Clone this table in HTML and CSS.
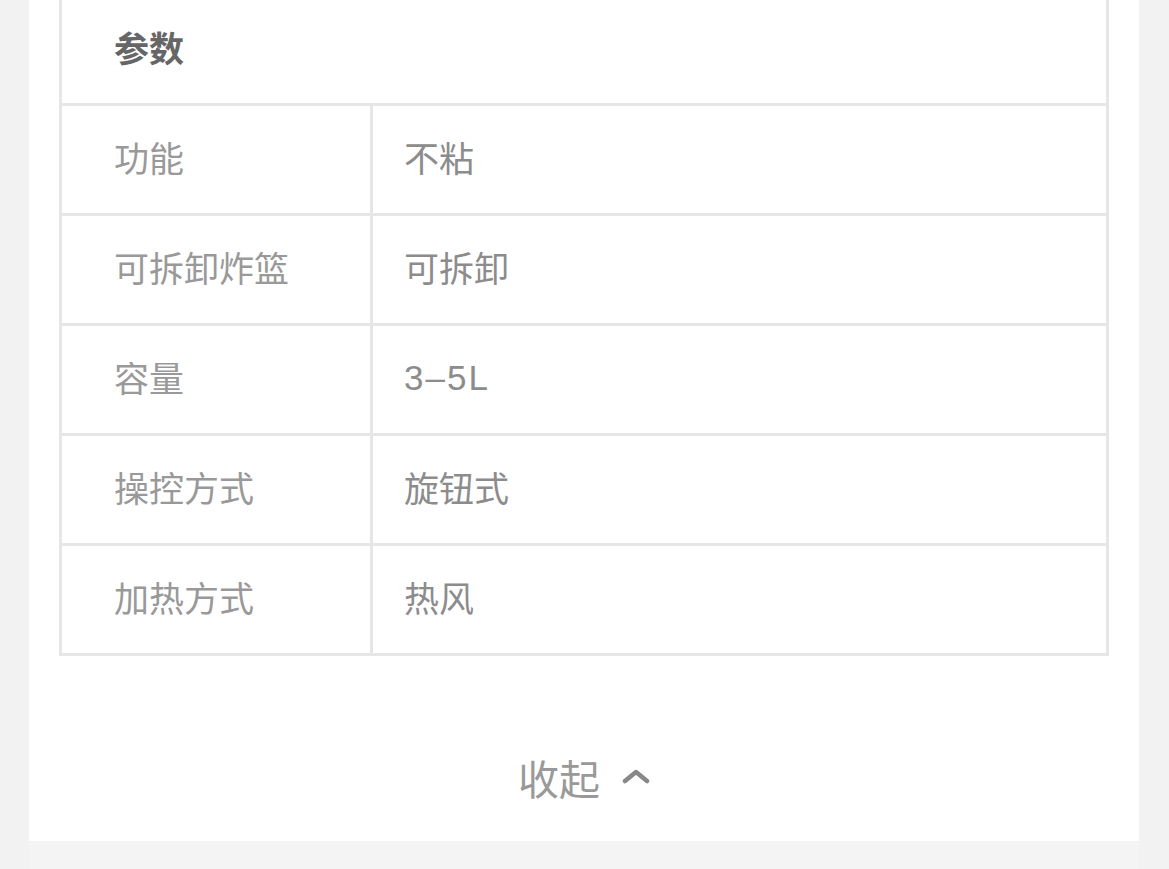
FILE: index.html
```html
<!DOCTYPE html>
<html lang="zh">
<head>
<meta charset="utf-8">
<link rel="stylesheet" href="styles.css">
</head>
<body>
<div class="panel">
  <div class="spec">
    <div class="head">参数</div>
    <div class="row"><div class="label">功能</div><div class="value">不粘</div></div>
    <div class="row"><div class="label">可拆卸炸篮</div><div class="value">可拆卸</div></div>
    <div class="row"><div class="label">容量</div><div class="value latin">3–5L</div></div>
    <div class="row"><div class="label">操控方式</div><div class="value">旋钮式</div></div>
    <div class="row"><div class="label">加热方式</div><div class="value">热风</div></div>
  </div>
  <div class="toggle">
    <span class="toggle-text">收起</span>
    <svg class="chev" width="28" height="16" viewBox="0 0 28 16"><polyline points="3,13 14,4 25,13" fill="none" stroke="#888" stroke-width="4.5" stroke-linecap="round" stroke-linejoin="round"/></svg>
  </div>
</div>
<div class="footer"></div>
</body>
</html>
```

FILE: styles.css
```css
html, body {
  margin: 0;
  padding: 0;
  background: #f2f2f2;
  font-family: "Noto Sans CJK SC", "Noto Sans", sans-serif;
  overflow: hidden;
}
.panel {
  margin: 0 30px 0 29px;
  background: #ffffff;
  padding: 0 30px 0 30px;
}
.spec {
  margin-top: -7px;
  background: #e6e6e6;
  padding: 3px;
  display: flex;
  flex-direction: column;
  gap: 3px;
}
.head {
  background: #fff;
  height: 107px;
  box-sizing: border-box;
  padding-bottom: 6px;
  display: flex;
  align-items: center;
  padding-left: 52px;
  font-size: 35px;
  font-weight: 700;
  color: #666;
}
.row {
  display: grid;
  grid-template-columns: 308px 1fr;
  gap: 3px;
  height: 107px;
}
.label, .value {
  background: #fff;
  display: flex;
  align-items: center;
  box-sizing: border-box;
  padding-bottom: 6px;
  font-size: 35px;
}
.label {
  padding-left: 52px;
  color: #999;
}
.value {
  padding-left: 31px;
  color: #8c8c8c;
}
.value.latin {
  font-family: "Liberation Sans", "Noto Sans CJK SC", sans-serif;
  letter-spacing: 2px;
  padding-bottom: 4px;
}
.toggle {
  height: 120px;
  padding-top: 61px;
  padding-bottom: 4px;
  display: flex;
  align-items: center;
  justify-content: center;
  gap: 22px;
}
.toggle-text {
  font-size: 41px;
  color: #999;
}
.chev {
  display: block;
  margin-top: -2px;
}
.footer {
  margin: 0 30px 0 29px;
  height: 40px;
  background: #f4f4f4;
}
```
